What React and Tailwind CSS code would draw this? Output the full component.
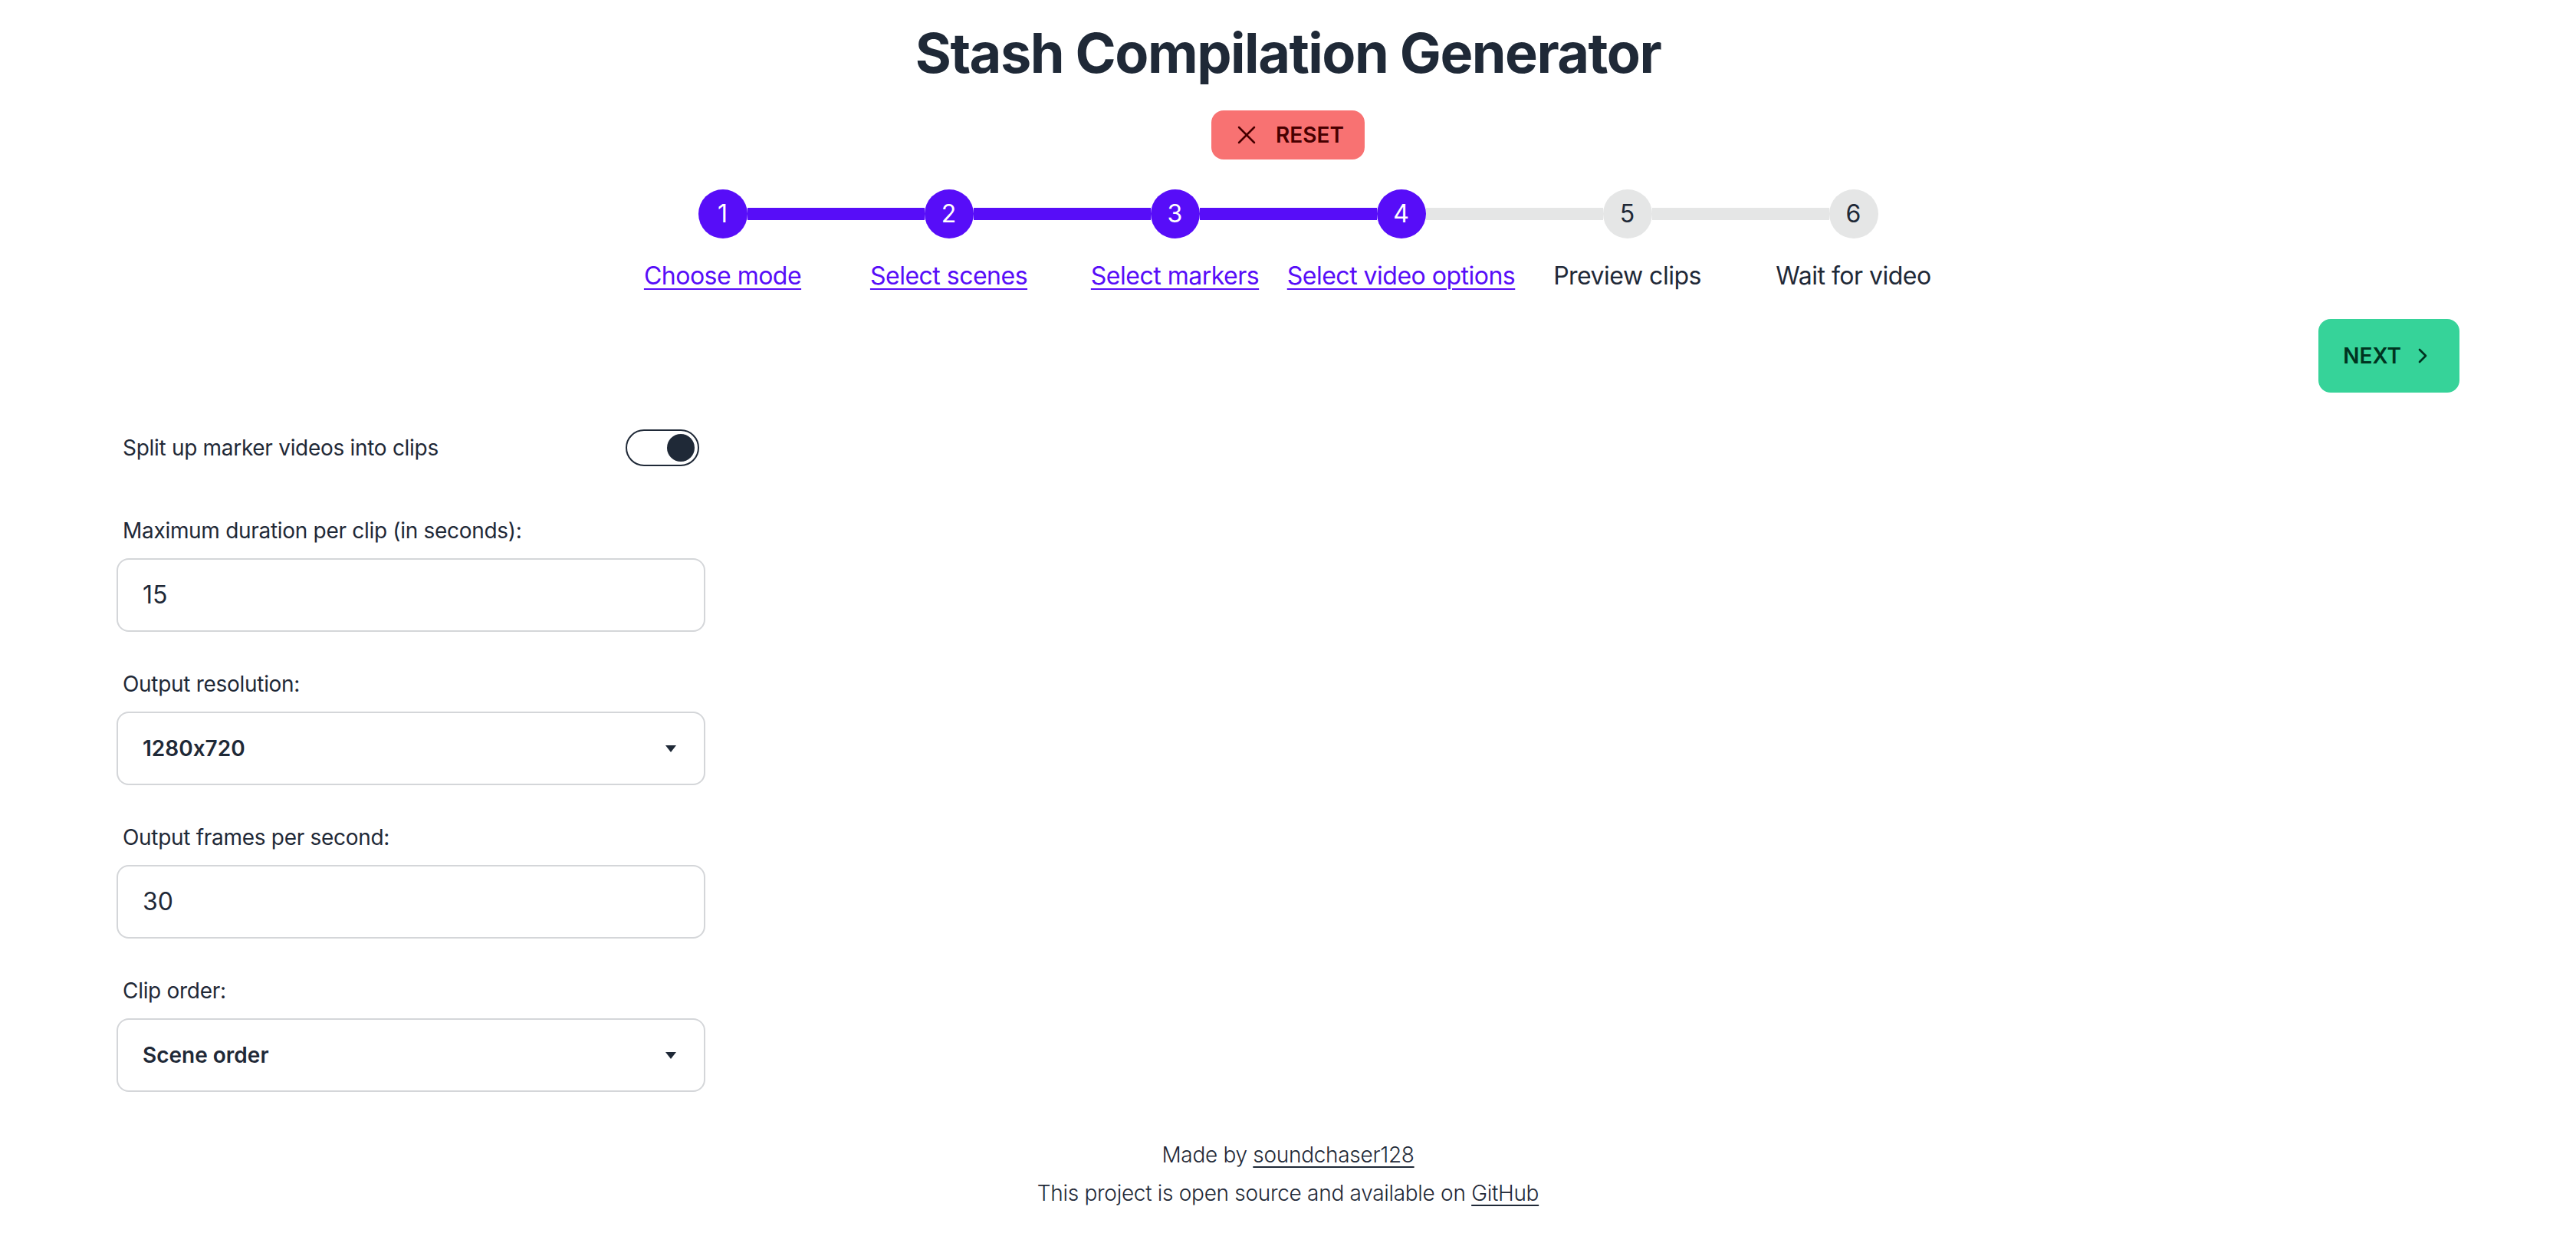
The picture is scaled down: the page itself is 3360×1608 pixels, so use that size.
import { X, ChevronRight } from 'lucide-react';

const steps = [
  { n: 1, label: 'Choose mode', done: true },
  { n: 2, label: 'Select scenes', done: true },
  { n: 3, label: 'Select markers', done: true },
  { n: 4, label: 'Select video options', done: true },
  { n: 5, label: 'Preview clips', done: false },
  { n: 6, label: 'Wait for video', done: false },
];

const Caret = () => (
  <svg width="14" height="9" viewBox="0 0 14 9" className="shrink-0">
    <path d="M0 0 H14 L7 9 Z" fill="#1f2937" />
  </svg>
);

const Field = ({ label, children }) => (
  <div className="flex flex-col">
    <div className="h-[72px] px-[8px] flex items-center text-[28px] leading-[40px] tracking-[-0.3px] text-[#1f2937]">{label}</div>
    {children}
  </div>
);

const TextInput = ({ value }) => (
  <div className="h-[96px] w-full rounded-[16px] border-2 border-[#d4d6d9] bg-white px-[32px] flex items-center text-[32px] text-[#1f2937]">
    {value}
  </div>
);

const Select = ({ value }) => (
  <div className="h-[96px] w-full rounded-[16px] border-2 border-[#d4d6d9] bg-white pl-[32px] pr-[36px] flex items-center justify-between text-[28px] font-semibold text-[#1f2937] [font-feature-settings:'calt'_0]">
    <span>{value}</span>
    <Caret />
  </div>
);

const Stepper = () => (
  <div className="flex justify-center mt-[31px]">
    {steps.map((s, i) => {
      const next = steps[i + 1];
      const leftColor = i === 0 ? 'bg-transparent' : s.done ? 'bg-[#570df8]' : 'bg-[#e5e6e6]';
      const rightColor = !next ? 'bg-transparent' : next.done ? 'bg-[#570df8]' : 'bg-[#e5e6e6]';
      return (
        <div key={s.n} className="w-[295px] flex flex-col items-center">
          <div className="h-[80px] w-full flex items-center">
            <div className={`flex-1 h-[16px] ${leftColor}`} />
            <div
              className={`w-[64px] h-[64px] rounded-full flex items-center justify-center text-[32px] ${
                s.done ? 'bg-[#570df8] text-white' : 'bg-[#e5e6e6] text-[#1f2937]'
              }`}
            >
              {s.n}
            </div>
            <div className={`flex-1 h-[16px] ${rightColor}`} />
          </div>
          <div className="mt-[17px] leading-[48px] text-[32px] whitespace-nowrap tracking-[-0.5px]">
            {s.done ? (
              <a href="#" className="text-[#570df8] underline decoration-2 underline-offset-[5px]">{s.label}</a>
            ) : (
              <span className="text-[#1f2937]">{s.label}</span>
            )}
          </div>
        </div>
      );
    })}
  </div>
);

export default function App() {
  return (
    <div className="min-h-[1608px] w-full bg-white font-['Inter','Liberation_Sans',sans-serif] text-[#1f2937] pt-[29px] px-[152px]">
      <h1 className="text-center text-[72px] leading-[80px] font-bold tracking-[-1.5px]">Stash Compilation Generator</h1>

      <div className="flex justify-center mt-[35px]">
        <button className="h-[64px] pl-[26px] pr-[27px] rounded-[16px] bg-[#f87272] text-[#470000] flex items-center gap-[18px] text-[28px] font-semibold uppercase">
          <X className="w-[40px] h-[40px]" strokeWidth={1.5} />
          Reset
        </button>
      </div>

      <Stepper />

      <div className="flex justify-end mt-[32px]">
        <button className="h-[96px] px-[32px] rounded-[16px] bg-[#36d399] text-[#003320] flex items-center gap-[12px] text-[28px] font-semibold uppercase">
          Next
          <ChevronRight className="w-[32px] h-[32px]" strokeWidth={2} />
        </button>
      </div>

      <div className="w-[768px] mt-[32px] flex flex-col gap-[32px]">
        <div className="h-[80px] px-[8px] flex items-center justify-between text-[28px] tracking-[-0.3px]">
          <span>Split up marker videos into clips</span>
          <div className="w-[96px] h-[48px] rounded-full border-2 border-[#1f2937] flex items-center justify-end pr-[4px]">
            <div className="w-[36px] h-[36px] rounded-full bg-[#1f2937]" />
          </div>
        </div>

        <Field label="Maximum duration per clip (in seconds):">
          <TextInput value="15" />
        </Field>

        <Field label="Output resolution:">
          <Select value="1280x720" />
        </Field>

        <Field label="Output frames per second:">
          <TextInput value="30" />
        </Field>

        <Field label="Clip order:">
          <Select value="Scene order" />
        </Field>
      </div>

      <footer className="mt-[57px] pb-[27px] text-center text-[28px] leading-[50px] font-light tracking-[-0.3px] text-[#1f2937]">
        <p>
          Made by <a href="#" className="underline underline-offset-[5px]">soundchaser128</a>
        </p>
        <p>
          This project is open source and available on <a href="#" className="underline underline-offset-[5px]">GitHub</a>
        </p>
      </footer>
    </div>
  );
}
